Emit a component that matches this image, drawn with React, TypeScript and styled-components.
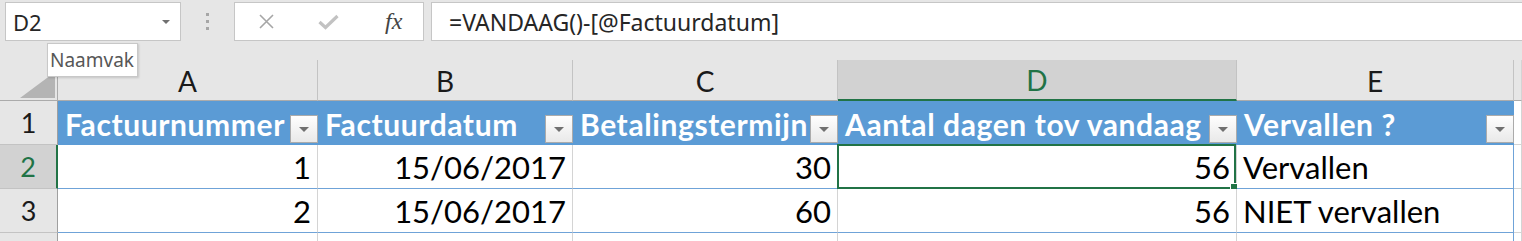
import React from "react";
import styled, { createGlobalStyle } from "styled-components";

const GlobalStyle = createGlobalStyle`
  html, body {
    margin: 0;
    padding: 0;
    background: #e6e6e6;
    overflow: hidden;
  }
`;

const Window = styled.div`
  position: relative;
  width: 1522px;
  height: 241px;
  overflow: hidden;
  background: #e6e6e6;
  font-family: Lato, "Liberation Sans", sans-serif;
`;

/* formula bar */
const FormulaBar = styled.div`
  display: flex;
  align-items: flex-start;
  height: 60px;
  padding: 2px 0 0 5px;
  box-sizing: border-box;
`;

const NameBox = styled.div`
  width: 176px;
  height: 39px;
  box-sizing: border-box;
  background: #fff;
  border: 1px solid #c6c6c6;
  display: flex;
  align-items: center;
  padding: 0 10px 0 7px;
  font-family: "Noto Sans", "Open Sans", sans-serif;
  font-size: 22px;
  color: #262626;
  & > .caret {
    margin-left: auto;
    width: 0;
    height: 0;
    border-left: 4px solid transparent;
    border-right: 4px solid transparent;
    border-top: 4px solid #707070;
  }
`;

const Grip = styled.div`
  width: 53px;
  height: 39px;
  display: flex;
  flex-direction: column;
  align-items: center;
  justify-content: center;
  gap: 4px;
  & > span {
    width: 3px;
    height: 3px;
    background: #a6a6a6;
  }
`;

const FormulaButtons = styled.div`
  width: 190px;
  height: 39px;
  box-sizing: border-box;
  background: #fff;
  border: 1px solid #c6c6c6;
  display: grid;
  grid-template-columns: repeat(3, 1fr);
  align-items: center;
  justify-items: center;
  margin-right: 7px;
`;

const FxLabel = styled.span`
  font-family: "Liberation Serif", serif;
  font-style: italic;
  font-size: 24px;
  color: #444;
  margin-left: 4px;
`;

const FormulaInput = styled.div`
  flex: 1;
  height: 39px;
  box-sizing: border-box;
  background: #fff;
  border: 1px solid #c6c6c6;
  border-right: none;
  display: flex;
  align-items: center;
  padding-left: 17px;
  font-family: "Noto Sans", "Open Sans", sans-serif;
  font-size: 23px;
  color: #262626;
`;

/* sheet */
const Sheet = styled.div`
  display: grid;
  grid-template-columns: 58px 260px 255px 265px 399px 277px 1fr;
  grid-template-rows: 41px 44px 44px 44px 1fr;
  height: 181px;
`;

const Corner = styled.div`
  position: relative;
  background: #e6e6e6;
  border-right: 1px solid #ababab;
  border-bottom: 1px solid #ababab;
  box-sizing: border-box;
  & > svg {
    position: absolute;
    left: 20px;
    top: 12px;
  }
`;

const ColHeader = styled.div<{ $active?: boolean }>`
  box-sizing: border-box;
  display: flex;
  align-items: center;
  justify-content: center;
  padding-top: 1px;
  font-size: 28px;
  line-height: 1;
  background: ${p => (p.$active ? "#d2d2d2" : "#e6e6e6")};
  color: ${p => (p.$active ? "#217346" : "#1a1a1a")};
  border-right: 1px solid #c3c3c3;
  border-bottom: ${p => (p.$active ? "2px solid #217346" : "1px solid #ababab")};
`;

const RowHeader = styled.div<{ $active?: boolean }>`
  box-sizing: border-box;
  display: flex;
  align-items: flex-end;
  justify-content: center;
  padding-bottom: 8px;
  font-size: 27px;
  line-height: 1;
  background: ${p => (p.$active ? "#d2d2d2" : "#e6e6e6")};
  color: ${p => (p.$active ? "#217346" : "#1a1a1a")};
  border-right: ${p => (p.$active ? "2px solid #217346" : "1px solid #9f9f9f")};
  border-bottom: 1px solid #c3c3c3;
`;

const HeadCell = styled.div`
  box-sizing: border-box;
  display: flex;
  align-items: flex-end;
  background: #5b9bd5;
  color: #fff;
  font-weight: 700;
  font-size: 30px;
  letter-spacing: 0.6px;
  line-height: 1.2;
  padding-left: 7px;
  overflow: hidden;
  white-space: nowrap;
  & > .label {
    padding-bottom: 3px;
  }
`;

const FilterButton = styled.div`
  flex: none;
  margin-left: auto;
  margin-bottom: 2px;
  width: 28px;
  height: 28px;
  box-sizing: border-box;
  border: 1px solid #ababab;
  background: linear-gradient(#fefefe, #e9e9e9);
  display: flex;
  align-items: center;
  justify-content: center;
  &::after {
    content: "";
    width: 0;
    height: 0;
    border-left: 5px solid transparent;
    border-right: 5px solid transparent;
    border-top: 5px solid #707070;
  }
`;

const DataCell = styled.div<{ $align?: "left" | "right"; $edge?: boolean }>`
  position: relative;
  box-sizing: border-box;
  display: flex;
  align-items: flex-end;
  justify-content: ${p => (p.$align === "left" ? "flex-start" : "flex-end")};
  padding: 0 6px 2px;
  background: #fff;
  color: #000;
  font-size: 31px;
  line-height: 1.2;
  white-space: nowrap;
  border-right: 1px solid ${p => (p.$edge ? "#6fa3d8" : "#d4d4d4")};
  border-bottom: 1px solid #6fa3d8;
`;

const BlankCell = styled.div<{ $head?: boolean }>`
  box-sizing: border-box;
  background: ${p => (p.$head ? "#e6e6e6" : "#fff")};
  border-right: 1px solid #d4d4d4;
  border-bottom: 1px solid ${p => (p.$head ? "#ababab" : "#d4d4d4")};
`;

const Selection = styled.div`
  position: absolute;
  left: -1px;
  top: -1px;
  right: 0;
  bottom: -1px;
  border: 2px solid #217346;
  pointer-events: none;
  & > span {
    position: absolute;
    right: -5px;
    bottom: -5px;
    width: 7px;
    height: 7px;
    background: #217346;
    border: 1px solid #fff;
  }
`;

const Tooltip = styled.div`
  position: absolute;
  left: 47px;
  top: 43px;
  width: 91px;
  height: 34px;
  box-sizing: border-box;
  background: #fff;
  border: 1px solid #c8c8c8;
  box-shadow: 1px 1px 2px rgba(0, 0, 0, 0.15);
  display: flex;
  align-items: center;
  padding-left: 2px;
  font-family: "Noto Sans", "Open Sans", sans-serif;
  font-size: 19px;
  color: #575757;
`;

const columns = ["A", "B", "C", "D", "E"];
const headers = ["Factuurnummer", "Factuurdatum", "Betalingstermijn", "Aantal dagen tov vandaag", "Vervallen ?"];
const rows = [
  ["1", "15/06/2017", "30", "56", "Vervallen"],
  ["2", "15/06/2017", "60", "56", "NIET vervallen"],
];

const App = () => {
  return (
    <Window>
      <GlobalStyle />
      <FormulaBar>
        <NameBox>
          D2
          <span className="caret" />
        </NameBox>
        <Grip>
          <span />
          <span />
          <span />
        </Grip>
        <FormulaButtons>
          <svg width="17" height="17" viewBox="0 0 17 17">
            <path d="M2 2 L15 15 M15 2 L2 15" stroke="#a6a6a6" strokeWidth="1.6" fill="none" />
          </svg>
          <svg width="21" height="16" viewBox="0 0 21 16">
            <path d="M1.5 8 L7.5 13.5 L19.5 2" stroke="#c2c2c2" strokeWidth="3.2" fill="none" />
          </svg>
          <FxLabel>fx</FxLabel>
        </FormulaButtons>
        <FormulaInput>=VANDAAG()-[@Factuurdatum]</FormulaInput>
      </FormulaBar>

      <Sheet>
        <Corner>
          <svg width="35" height="26" viewBox="0 0 35 26">
            <polygon points="0,26 35,26 35,0" fill="#b4b4b4" />
          </svg>
        </Corner>
        {columns.map(c => (
          <ColHeader key={c} $active={c === "D"}>
            {c}
          </ColHeader>
        ))}
        <BlankCell $head />

        <RowHeader>1</RowHeader>
        {headers.map(h => (
          <HeadCell key={h}>
            <span className="label">{h}</span>
            <FilterButton />
          </HeadCell>
        ))}
        <BlankCell />

        {rows.map((r, ri) => (
          <React.Fragment key={ri}>
            <RowHeader $active={ri === 0}>{ri + 2}</RowHeader>
            {r.map((v, ci) => (
              <DataCell key={ci} $align={ci === 4 ? "left" : "right"} $edge={ci === 4}>
                {v}
                {ri === 0 && ci === 3 && (
                  <Selection>
                    <span />
                  </Selection>
                )}
              </DataCell>
            ))}
            <BlankCell />
          </React.Fragment>
        ))}

        <RowHeader />
        {columns.map((c, ci) => (
          <DataCell key={c} $edge={ci === 4} />
        ))}
        <BlankCell />
      </Sheet>

      <Tooltip>Naamvak</Tooltip>
    </Window>
  );
};

export default App;
